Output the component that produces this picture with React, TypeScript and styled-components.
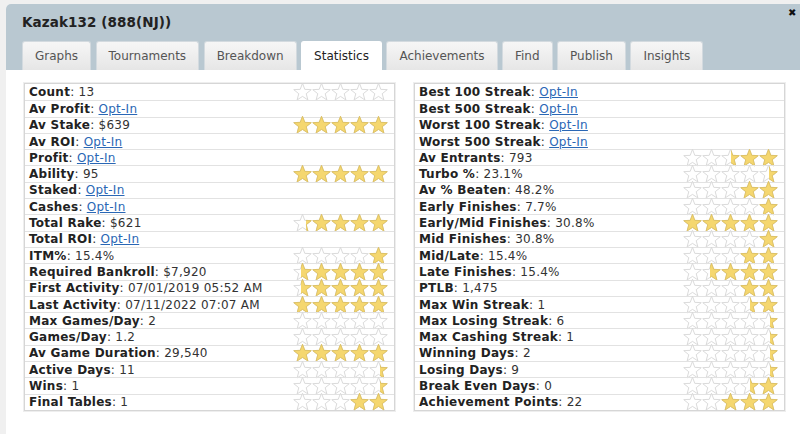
import React from "react";
import styled, { createGlobalStyle } from "styled-components";

const STAR_W = 19;

const GlobalStyle = createGlobalStyle`
  html, body {
    margin: 0;
    padding: 0;
    background: #f0f0f0;
    overflow: hidden;
  }
  body {
    font-family: "DejaVu Sans", Verdana, sans-serif;
  }
`;

const Dialog = styled.div`
  margin: 4px 0 0 6px;
  width: 812px;
  height: 440px;
  background: #fff;
  border-radius: 5px 5px 0 0;
`;

const Header = styled.div`
  position: relative;
  background: #b9c8d1;
  border-radius: 5px 5px 0 0;
  padding: 10px 0 0 16px;
`;

const Title = styled.div`
  font-size: 13.5px;
  font-weight: bold;
  line-height: 17px;
  letter-spacing: 0.1px;
  color: #222;
`;

const Close = styled.span`
  position: absolute;
  top: 3px;
  left: 782px;
  font-size: 10px;
  font-weight: bold;
  color: #111;
`;

const TabBar = styled.div`
  display: flex;
  gap: 4.5px;
  margin-top: 10px;
`;

const Tab = styled.div<{ active?: boolean }>`
  height: 29px;
  box-sizing: border-box;
  padding: 0 12px;
  line-height: 28px;
  font-size: 12px;
  color: ${({ active }) => (active ? "#222" : "#555")};
  border: 1px solid ${({ active }) => (active ? "#fff" : "#d3dadf")};
  border-bottom: none;
  border-radius: 3px 3px 0 0;
  background: ${({ active }) => (active ? "#fff" : "linear-gradient(#f6f6f6, #e6e6e6)")};
`;

const Content = styled.div`
  display: grid;
  grid-template-columns: 371px 371px;
  column-gap: 19px;
  padding: 13px 0 0 18px;
`;

const Table = styled.div`
  border: 1px solid #d6d6d6;
  box-shadow: 0 0 0 1px #eeeeee;
`;

const Row = styled.div`
  position: relative;
  display: flex;
  align-items: center;
  justify-content: space-between;
  box-sizing: border-box;
  height: 16.3px;
  padding: 0 6px 0 4px;
  font-size: 12px;
  letter-spacing: 0.25px;
  color: #333;
  white-space: nowrap;
  & + & {
    border-top: 1px solid #e2e2e2;
  }
`;

const Label = styled.b`
  color: #222;
`;

const OptIn = styled.a`
  color: #2a67b5;
  text-decoration: underline;
`;

const StarBox = styled.div`
  position: relative;
  width: ${STAR_W * 5}px;
  height: 18px;
  margin: -1px 0;
`;

const FillClip = styled.div`
  position: absolute;
  top: 0;
  right: 0;
  height: 18px;
  overflow: hidden;
  & > svg {
    position: absolute;
    top: 0;
    right: 0;
  }
`;

const STAR_POINTS =
  "9.5,0.3 11.79,6.34 18.25,6.66 13.21,10.71 14.91,16.94 9.5,13.4 4.09,16.94 5.79,10.71 0.75,6.66 7.21,6.34";

const StarStrip = ({ filled }: { filled?: boolean }) => (
  <svg width={STAR_W * 5} height={18} viewBox={`0 0 ${STAR_W * 5} 18`}>
    {[0, 1, 2, 3, 4].map((i) => (
      <polygon
        key={i}
        points={STAR_POINTS}
        transform={`translate(${i * STAR_W} 0)`}
        fill={filled ? "#f5d76f" : "#fff"}
        stroke={filled ? "#dcc061" : "#d6d6d6"}
        strokeWidth={0.9}
        strokeLinejoin="round"
      />
    ))}
  </svg>
);

const Stars = ({ value }: { value: number }) => (
  <StarBox>
    <StarStrip />
    {value > 0 && (
      <FillClip style={{ width: value * STAR_W }}>
        <StarStrip filled />
      </FillClip>
    )}
  </StarBox>
);

type Stat = { label: string; value?: string; stars?: number };

const left: Stat[] = [
  { label: "Count", value: "13", stars: 0 },
  { label: "Av Profit" },
  { label: "Av Stake", value: "$639", stars: 5 },
  { label: "Av ROI" },
  { label: "Profit" },
  { label: "Ability", value: "95", stars: 5 },
  { label: "Staked" },
  { label: "Cashes" },
  { label: "Total Rake", value: "$621", stars: 4.3 },
  { label: "Total ROI" },
  { label: "ITM%", value: "15.4%", stars: 1 },
  { label: "Required Bankroll", value: "$7,920", stars: 4.6 },
  { label: "First Activity", value: "07/01/2019 05:52 AM", stars: 4.6 },
  { label: "Last Activity", value: "07/11/2022 07:07 AM", stars: 5 },
  { label: "Max Games/Day", value: "2", stars: 0 },
  { label: "Games/Day", value: "1.2", stars: 0 },
  { label: "Av Game Duration", value: "29,540", stars: 5 },
  { label: "Active Days", value: "11", stars: 0.4 },
  { label: "Wins", value: "1", stars: 0.4 },
  { label: "Final Tables", value: "1", stars: 2 },
];

const right: Stat[] = [
  { label: "Best 100 Streak" },
  { label: "Best 500 Streak" },
  { label: "Worst 100 Streak" },
  { label: "Worst 500 Streak" },
  { label: "Av Entrants", value: "793", stars: 2.5 },
  { label: "Turbo %", value: "23.1%", stars: 0.45 },
  { label: "Av % Beaten", value: "48.2%", stars: 2 },
  { label: "Early Finishes", value: "7.7%", stars: 1 },
  { label: "Early/Mid Finishes", value: "30.8%", stars: 5 },
  { label: "Mid Finishes", value: "30.8%", stars: 1 },
  { label: "Mid/Late", value: "15.4%", stars: 2 },
  { label: "Late Finishes", value: "15.4%", stars: 3.6 },
  { label: "PTLB", value: "1,475", stars: 2 },
  { label: "Max Win Streak", value: "1", stars: 1.5 },
  { label: "Max Losing Streak", value: "6", stars: 0.4 },
  { label: "Max Cashing Streak", value: "1", stars: 0.4 },
  { label: "Winning Days", value: "2", stars: 0.4 },
  { label: "Losing Days", value: "9", stars: 0.4 },
  { label: "Break Even Days", value: "0", stars: 1.5 },
  { label: "Achievement Points", value: "22", stars: 3 },
];

const tabs = ["Graphs", "Tournaments", "Breakdown", "Statistics", "Achievements", "Find", "Publish", "Insights"];

const StatTable = ({ rows }: { rows: Stat[] }) => (
  <Table>
    {rows.map((r) => (
      <Row key={r.label}>
        <span>
          <Label>{r.label}</Label>:{" "}
          {r.value !== undefined ? r.value : <OptIn href="#">Opt-In</OptIn>}
        </span>
        {r.stars !== undefined && <Stars value={r.stars} />}
      </Row>
    ))}
  </Table>
);

export default function App() {
  return (
    <>
      <GlobalStyle />
      <Dialog>
        <Header>
          <Title>Kazak132 (888(NJ))</Title>
          <Close>✖</Close>
          <TabBar>
            {tabs.map((t) => (
              <Tab key={t} active={t === "Statistics"}>
                {t}
              </Tab>
            ))}
          </TabBar>
        </Header>
        <Content>
          <StatTable rows={left} />
          <StatTable rows={right} />
        </Content>
      </Dialog>
    </>
  );
}
